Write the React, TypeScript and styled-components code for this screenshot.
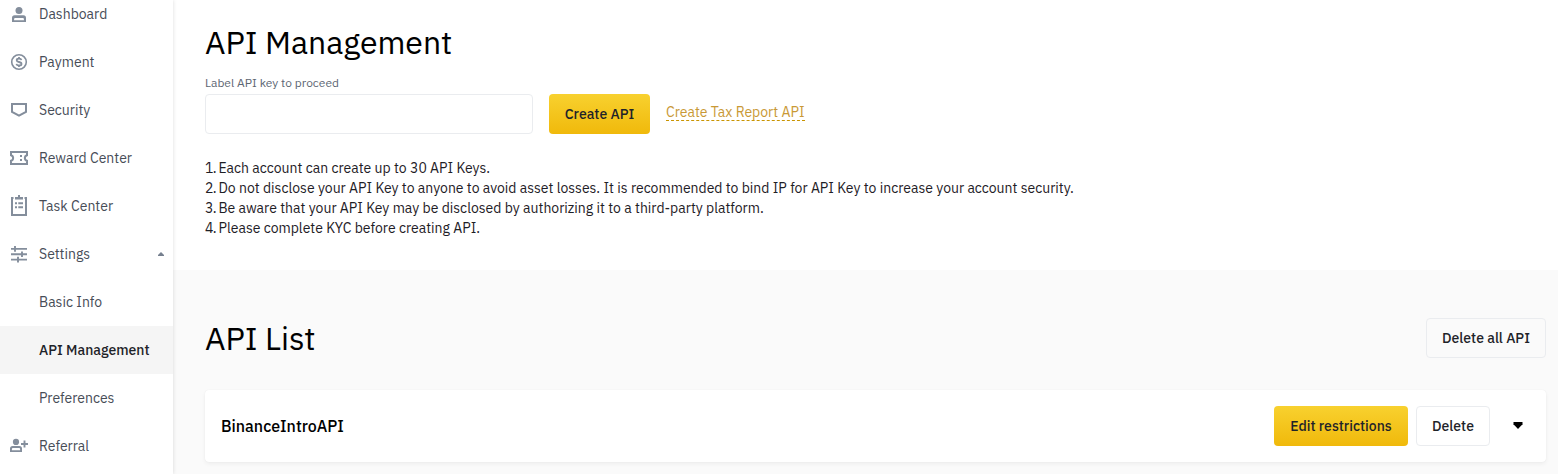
import React from 'react';
import styled, { createGlobalStyle } from 'styled-components';

const GlobalStyle = createGlobalStyle`
  * { box-sizing: border-box; }
  html, body, #root { height: 100%; }
  body {
    margin: 0;
    overflow: hidden;
    background: #fff;
    color: #000;
    font-family: 'IBM Plex Sans', Roboto, 'Liberation Sans', sans-serif;
    font-size: 14px;
  }
`;

const Page = styled.div`
  display: flex;
  height: 474px;
  overflow: hidden;
`;

const Sidebar = styled.nav`
  position: relative;
  z-index: 1;
  flex: none;
  width: 173px;
  height: 474px;
  background: #fff;
  box-shadow: 0 0 4px rgba(0, 0, 0, 0.14);
`;

const MenuList = styled.div`
  display: flex;
  flex-direction: column;
  margin-top: -10px;
`;

const MenuItem = styled.a<{ $active?: boolean }>`
  display: flex;
  align-items: center;
  flex: none;
  height: 48px;
  padding: 0 9px;
  background: ${(p) => (p.$active ? '#f5f5f5' : 'transparent')};
  color: ${(p) => (p.$active ? '#1e2329' : '#474d57')};
  font-weight: ${(p) => (p.$active ? 500 : 400)};
`;

const IconSlot = styled.span`
  display: flex;
  flex: none;
  width: 30px;
  color: #848e9c;
`;

const MenuText = styled.span`
  flex: 1;
  white-space: nowrap;
`;

const Main = styled.main`
  flex: 1;
  min-width: 0;
  display: flex;
  flex-direction: column;
`;

const CreateSection = styled.section`
  flex: none;
  height: 270px;
  padding: 22px 32px 0;
`;

const Title = styled.h1`
  margin: 0;
  font-size: 32px;
  line-height: 40px;
  font-weight: 400;
  letter-spacing: -0.04px;
  white-space: nowrap;
`;

const Label = styled.label`
  display: block;
  margin-top: 13px;
  height: 16px;
  font-size: 12px;
  line-height: 16px;
  color: #5d6673;
`;

const FormRow = styled.div`
  display: flex;
  align-items: center;
  gap: 16px;
  margin-top: 3px;
`;

const Input = styled.input`
  width: 328px;
  height: 40px;
  border: 1px solid #eaecef;
  border-radius: 4px;
  background: #fff;
`;

const Button = styled.button<{ $primary?: boolean; $width: number }>`
  flex: none;
  width: ${(p) => p.$width}px;
  height: 40px;
  padding: 0;
  border: ${(p) => (p.$primary ? '0' : '1px solid #eaecef')};
  border-radius: 4px;
  background: ${(p) => (p.$primary ? 'linear-gradient(180deg, #f8d12f 0%, #f0b90b 100%)' : 'transparent')};
  color: #1e2329;
  font: 500 14px/20px 'IBM Plex Sans', Roboto, 'Liberation Sans', sans-serif;
  white-space: nowrap;
`;

const TaxLink = styled.a`
  margin-bottom: 3px;
  line-height: 16px;
  border-bottom: 1px dashed #c99400;
  color: #c99936;
  white-space: nowrap;
`;

const Notes = styled.div`
  margin-top: 24px;
`;

const Note = styled.p`
  margin: 0;
  line-height: 20px;
  color: #1e2026;
  white-space: nowrap;
`;

const NoteNumber = styled.span`
  letter-spacing: -0.7px;
`;

const ListSection = styled.section`
  flex: 1;
  padding: 48px 12px 0 32px;
  background: #fafafa;
`;

const ListHeader = styled.header`
  display: flex;
  align-items: center;
  justify-content: space-between;
  height: 40px;
`;

const ApiCard = styled.article`
  display: flex;
  align-items: center;
  gap: 8px;
  height: 72px;
  margin-top: 32px;
  padding: 0 23px 0 16px;
  border-radius: 4px;
  background: #fff;
  box-shadow: 0 2px 4px rgba(20, 21, 26, 0.05), 0 0 1px rgba(20, 21, 26, 0.08);
`;

const ApiName = styled.h2`
  flex: 1;
  margin: 0;
  font-size: 16px;
  font-weight: 500;
`;

const ToggleArrow = styled.svg`
  flex: none;
  margin: 0 0 1px 15px;
`;

const Icon = ({ children }: { children: React.ReactNode }) => (
  <svg width="20" height="20" viewBox="0 0 20 20" fill="none" overflow="visible">
    {children}
  </svg>
);

const icons = {
  dashboard: (
    <Icon>
      <circle cx="10" cy="6.4" r="3.5" fill="currentColor" />
      <path
        fillRule="evenodd"
        fill="currentColor"
        d="M5.6 11.2h8.8a2.6 2.6 0 0 1 2.6 2.6V18H3v-4.2a2.6 2.6 0 0 1 2.6-2.6ZM5.1 16.2h9.8v-1.3a1 1 0 0 0-1-1H6.1a1 1 0 0 0-1 1Z"
      />
    </Icon>
  ),
  payment: (
    <Icon>
      <circle cx="10" cy="10" r="7.3" stroke="currentColor" strokeWidth="1.6" />
      <path
        stroke="currentColor"
        strokeWidth="1.8"
        d="M12.4 8.1c-.2-1-1.1-1.4-2.4-1.4s-2.3.5-2.3 1.5c0 1.2 1 1.5 2.3 1.8s2.5.7 2.5 1.9c0 1.1-1 1.6-2.5 1.6s-2.4-.6-2.6-1.6M10 5v1.7M10 13.3V15"
      />
    </Icon>
  ),
  security: (
    <Icon>
      <path stroke="currentColor" strokeWidth="2" d="M3 4h14v7.8L10 15.6l-7-3.8Z" />
    </Icon>
  ),
  reward: (
    <Icon>
      <path
        stroke="currentColor"
        strokeWidth="2"
        d="M2 4h16v3.2a2.9 2.9 0 0 0 0 5.6V16H2v-3.2a2.9 2.9 0 0 0 0-5.6Z"
      />
      <path fill="currentColor" d="M11 7h2v2h-2ZM11 11h2v2h-2Z" />
    </Icon>
  ),
  task: (
    <Icon>
      <path stroke="currentColor" strokeWidth="2" d="M4.5 2H3v17h14V2h-1.5" />
      <path fill="currentColor" d="M6 1h3V-1h2V1h3v2.6H6ZM6 6.2h2v2H6ZM9.3 6.2H14v2H9.3ZM6 10.3h2v2H6ZM9.3 10.3H14v2H9.3Z" />
    </Icon>
  ),
  settings: (
    <Icon>
      <path
        stroke="currentColor"
        strokeWidth="1.9"
        d="M2 4.9h16M2 10.2h16M2 15.6h16M6 2v5.7M13 7.4v5.6M9 12.8v5.7"
      />
    </Icon>
  ),
  referral: (
    <Icon>
      <circle cx="7" cy="5.9" r="3.1" fill="currentColor" />
      <path
        fillRule="evenodd"
        fill="currentColor"
        d="M3.6 10h6.8a2.6 2.6 0 0 1 2.6 2.6V16H1v-3.4A2.6 2.6 0 0 1 3.6 10ZM2.9 14.2h8.2v-1.1a1 1 0 0 0-1-1H3.9a1 1 0 0 0-1 1Z"
      />
      <path stroke="currentColor" strokeWidth="1.9" d="M15.5 4.5v7M12 8h7" />
    </Icon>
  ),
};

type Entry = { label: string; icon?: keyof typeof icons; active?: boolean; open?: boolean };

const entries: Entry[] = [
  { label: 'Dashboard', icon: 'dashboard' },
  { label: 'Payment', icon: 'payment' },
  { label: 'Security', icon: 'security' },
  { label: 'Reward Center', icon: 'reward' },
  { label: 'Task Center', icon: 'task' },
  { label: 'Settings', icon: 'settings', open: true },
  { label: 'Basic Info' },
  { label: 'API Management', active: true },
  { label: 'Preferences' },
  { label: 'Referral', icon: 'referral' },
];

const notes = [
  'Each account can create up to 30 API Keys.',
  'Do not disclose your API Key to anyone to avoid asset losses. It is recommended to bind IP for API Key to increase your account security.',
  'Be aware that your API Key may be disclosed by authorizing it to a third-party platform.',
  'Please complete KYC before creating API.',
];

export default function App() {
  return (
    <Page>
      <GlobalStyle />
      <Sidebar>
        <MenuList>
          {entries.map((e) => (
            <MenuItem key={e.label} $active={e.active}>
              <IconSlot>{e.icon && icons[e.icon]}</IconSlot>
              <MenuText>{e.label}</MenuText>
              {e.open && (
                <svg width="6" height="4" viewBox="0 0 6 4">
                  <path d="M3 0 6 3v1H0V3Z" fill="#76808f" />
                </svg>
              )}
            </MenuItem>
          ))}
        </MenuList>
      </Sidebar>
      <Main>
        <CreateSection>
          <Title>API Management</Title>
          <Label htmlFor="api-label">Label API key to proceed</Label>
          <FormRow>
            <Input id="api-label" />
            <Button $primary $width={101}>Create API</Button>
            <TaxLink>Create Tax Report API</TaxLink>
          </FormRow>
          <Notes>
            {notes.map((n, i) => (
              <Note key={n}>
                <NoteNumber>{`${i + 1}. `}</NoteNumber>
                {n}
              </Note>
            ))}
          </Notes>
        </CreateSection>
        <ListSection>
          <ListHeader>
            <Title as="h2">API List</Title>
            <Button $width={120}>Delete all API</Button>
          </ListHeader>
          <ApiCard>
            <ApiName>BinanceIntroAPI</ApiName>
            <Button $primary $width={134}>Edit restrictions</Button>
            <Button $width={74}>Delete</Button>
            <ToggleArrow width="10" height="7" viewBox="0 0 10 7">
              <path d="M.5 0h9v2.2L5 7 .5 2.2Z" fill="#000" />
            </ToggleArrow>
          </ApiCard>
        </ListSection>
      </Main>
    </Page>
  );
}
